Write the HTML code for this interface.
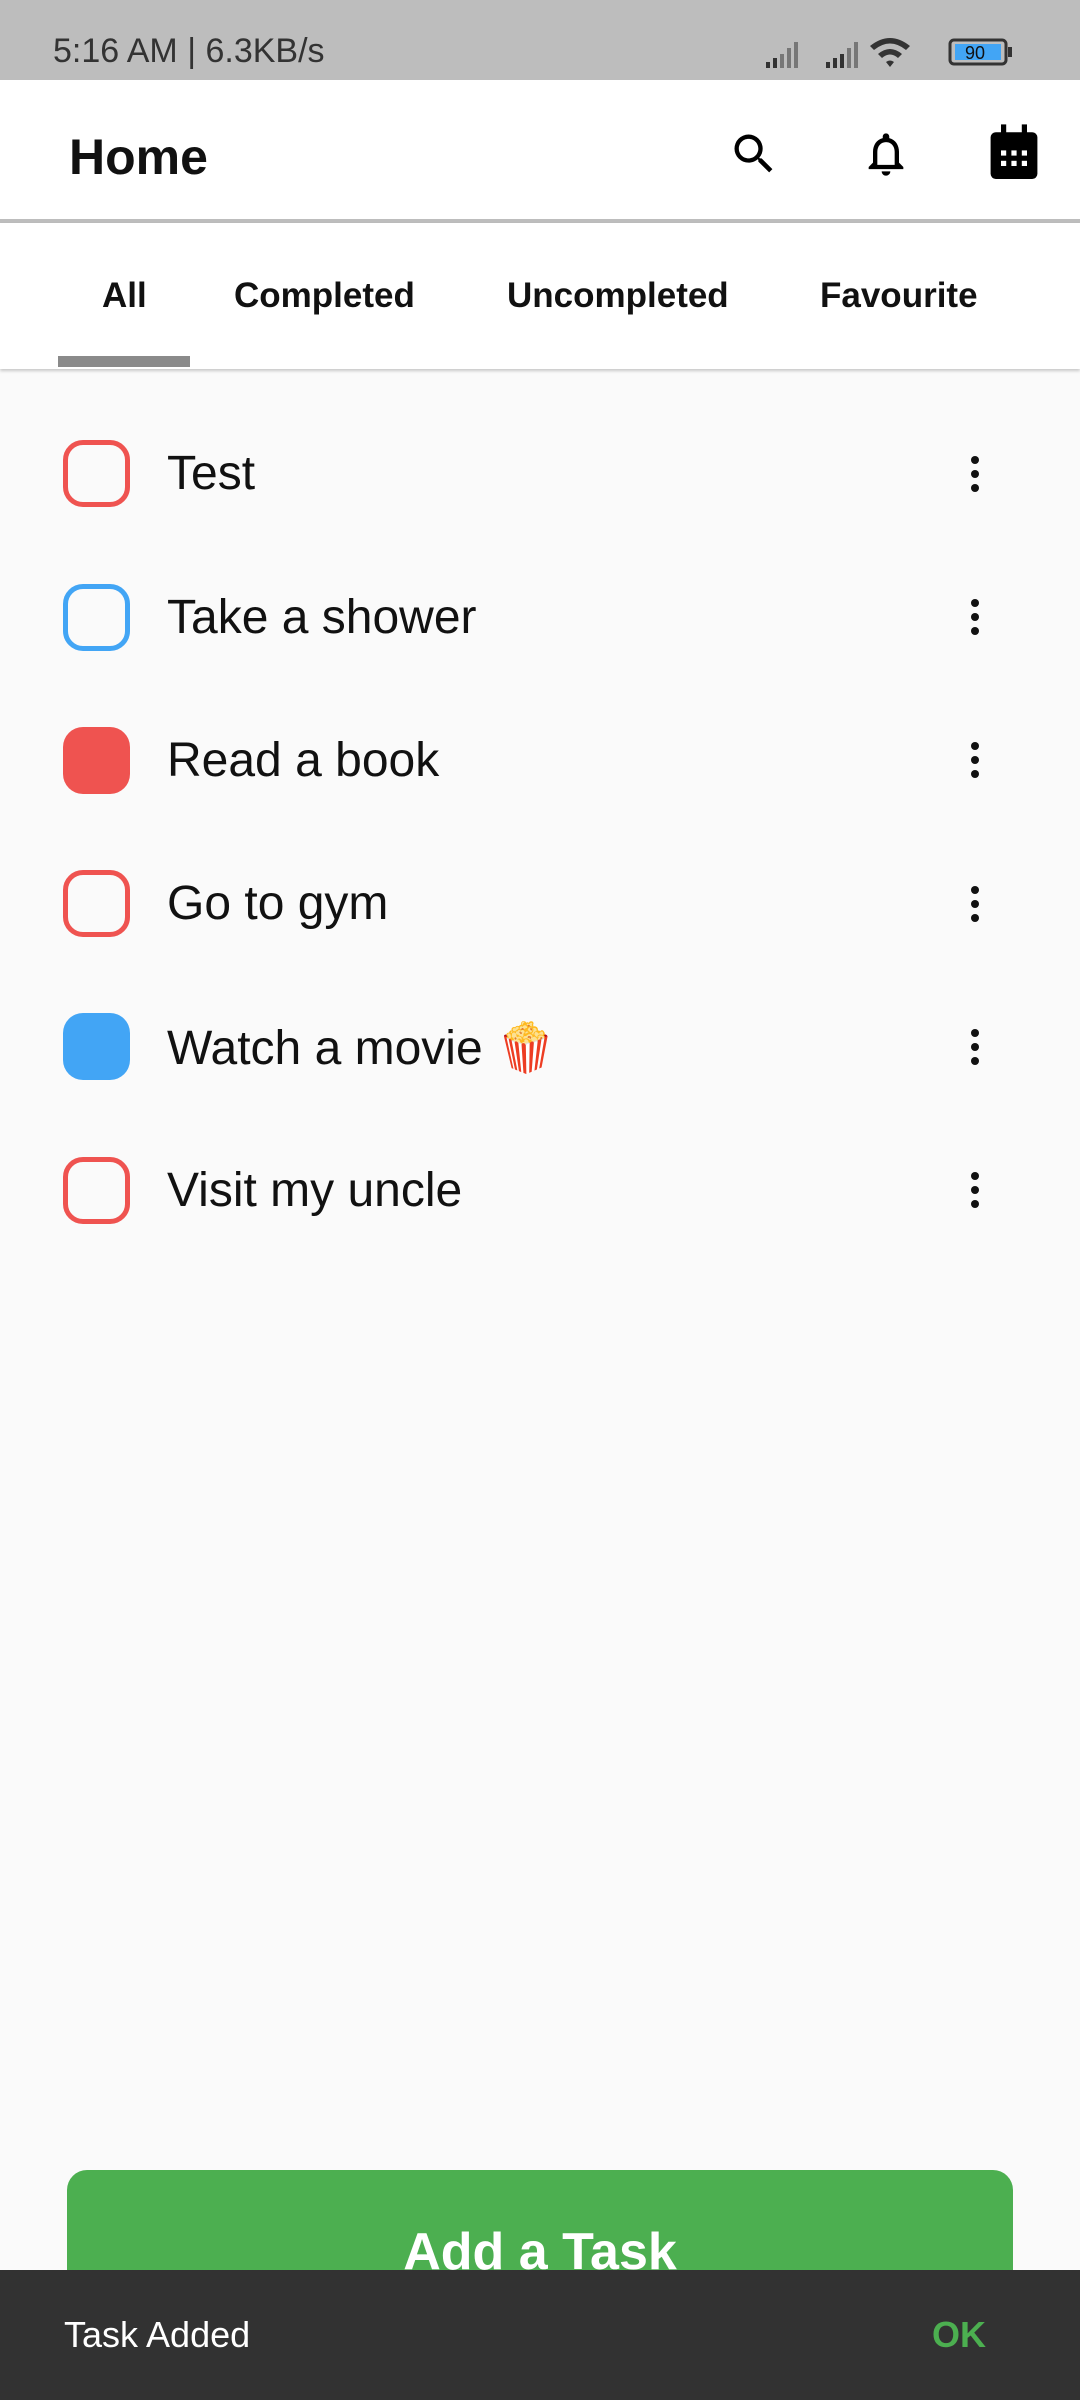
<!DOCTYPE html>
<html><head><meta charset="utf-8"><style>
*{margin:0;padding:0;box-sizing:border-box}
body{width:1080px;height:2400px;background:#fafafa;font-family:"Liberation Sans",sans-serif;position:relative;overflow:hidden;color:#111}
.abs{position:absolute}
.sb{left:0;top:0;width:1080px;height:80px;background:#bdbdbd}
.bar{left:0;top:80px;width:1080px;height:139px;background:#fff}
.tabs{left:0;top:223px;width:1080px;height:146px;background:#fff;box-shadow:0 2px 3px rgba(0,0,0,.2)}
.tab{top:276px;font-size:35px;font-weight:bold;color:#111}
.cb{left:63px;width:67px;height:67px;border-radius:20px}
.o{border:5px solid}
.txt{left:167px;font-size:48px;color:#111}
.dots{left:971px;width:10px}
.dots i{display:block;width:8px;height:8px;border-radius:50%;background:#111;margin-bottom:6px}
</style></head><body>
<div class="abs sb"></div>
<div class="abs" style="left:53px;top:32px;font-size:34px;color:#333">5:16 AM | 6.3KB/s</div>
<svg class="abs" style="left:760px;top:34px" width="280" height="36" viewBox="0 0 280 36">
<g fill="#333"><rect x="6" y="28" width="4" height="6"/><rect x="13" y="24" width="4" height="10"/><rect x="20" y="20" width="4" height="14" fill="#777"/><rect x="27" y="14" width="4" height="20" fill="#777"/><rect x="34" y="8" width="4" height="26" fill="#777"/>
<rect x="66" y="28" width="4" height="6"/><rect x="73" y="24" width="4" height="10"/><rect x="80" y="20" width="4" height="14"/><rect x="87" y="14" width="4" height="20" fill="#777"/><rect x="94" y="8" width="4" height="26" fill="#777"/></g>
<path d="M110 12 Q130 -4 150 12 L146 16 Q130 3 114 16Z M118 20 Q130 10 142 20 L138 24 Q130 17 122 24Z M126 28 Q130 25 134 28 L130 33Z" fill="#333"/>
<rect x="190" y="6" width="56" height="24" rx="4" fill="none" stroke="#333" stroke-width="3"/><rect x="195" y="10" width="46" height="16" fill="#42a5f5"/><rect x="248" y="13" width="4" height="10" fill="#333"/>
<text x="205" y="25" font-size="18" font-family="Liberation Sans" fill="#111">90</text></svg>
<div class="abs bar"></div>
<div class="abs" style="left:69px;top:128px;font-size:50px;font-weight:bold">Home</div>
<svg class="abs" style="left:728px;top:128px" width="52" height="52" viewBox="0 0 24 24"><path d="M15.5 14h-.79l-.28-.27A6.47 6.47 0 0 0 16 9.5 6.5 6.5 0 1 0 9.5 16c1.61 0 3.09-.59 4.23-1.57l.27.28v.79l5 4.99L20.49 19l-4.99-5zm-6 0C7.01 14 5 11.99 5 9.5S7.01 5 9.5 5 14 7.01 14 9.5 11.99 14 9.5 14z"/></svg>
<svg class="abs" style="left:860px;top:126px" width="52" height="56" viewBox="0 0 24 24"><path d="M12 22c1.1 0 2-.9 2-2h-4c0 1.1.9 2 2 2zm6-6v-5c0-3.07-1.63-5.64-4.5-6.32V4c0-.83-.67-1.5-1.5-1.5s-1.5.67-1.5 1.5v.68C7.64 5.36 6 7.92 6 11v5l-2 2v1h16v-1l-2-2zm-2 1H8v-6c0-2.48 1.51-4.5 4-4.5s4 2.02 4 4.5v6z"/></svg>
<svg class="abs" style="left:988px;top:124px" width="52" height="58" viewBox="0 0 20 22"><rect x="1" y="3" width="18" height="18" rx="2"/><rect x="5" y="0" width="2" height="5"/><rect x="13" y="0" width="2" height="5"/><g fill="#fff"><rect x="5" y="10" width="2" height="2"/><rect x="9" y="10" width="2" height="2"/><rect x="13" y="10" width="2" height="2"/><rect x="5" y="14" width="2" height="2"/><rect x="9" y="14" width="2" height="2"/><rect x="13" y="14" width="2" height="2"/></g></svg>
<div class="abs" style="left:0;top:219px;width:1080px;height:4px;background:#bdbdbd"></div>
<div class="abs tabs"></div>
<div class="abs tab" style="left:102px">All</div>
<div class="abs tab" style="left:234px">Completed</div>
<div class="abs tab" style="left:507px">Uncompleted</div>
<div class="abs tab" style="left:820px">Favourite</div>
<div class="abs" style="left:58px;top:356px;width:132px;height:11px;background:#8a8a8a"></div>

<div class="abs cb o" style="top:440px;border-color:#ef5350"></div><div class="abs txt" style="top:446px">Test</div>
<div class="abs cb o" style="top:584px;border-color:#42a5f5"></div><div class="abs txt" style="top:590px">Take a shower</div>
<div class="abs cb" style="top:727px;background:#ef5350"></div><div class="abs txt" style="top:733px">Read a book</div>
<div class="abs cb o" style="top:870px;border-color:#ef5350"></div><div class="abs txt" style="top:876px">Go to gym</div>
<div class="abs cb" style="top:1013px;background:#42a5f5"></div><div class="abs txt" style="top:1019px">Watch a movie 🍿</div>
<div class="abs cb o" style="top:1157px;border-color:#ef5350"></div><div class="abs txt" style="top:1163px">Visit my uncle</div>
<div class="abs dots" style="top:456px"><i></i><i></i><i></i></div>
<div class="abs dots" style="top:599px"><i></i><i></i><i></i></div>
<div class="abs dots" style="top:742px"><i></i><i></i><i></i></div>
<div class="abs dots" style="top:886px"><i></i><i></i><i></i></div>
<div class="abs dots" style="top:1029px"><i></i><i></i><i></i></div>
<div class="abs dots" style="top:1172px"><i></i><i></i><i></i></div>

<div class="abs" style="left:67px;top:2170px;width:946px;height:160px;background:#4caf50;border-radius:20px"></div>
<div class="abs" style="left:67px;top:2222px;width:946px;text-align:center;color:#fff;font-size:52px;font-weight:bold">Add a Task</div>
<div class="abs" style="left:0;top:2270px;width:1080px;height:130px;background:#323232"></div>
<div class="abs" style="left:64px;top:2314px;font-size:36px;color:#fff">Task Added</div>
<div class="abs" style="left:932px;top:2314px;font-size:36px;color:#4caf50;font-weight:bold">OK</div>
</body></html>
